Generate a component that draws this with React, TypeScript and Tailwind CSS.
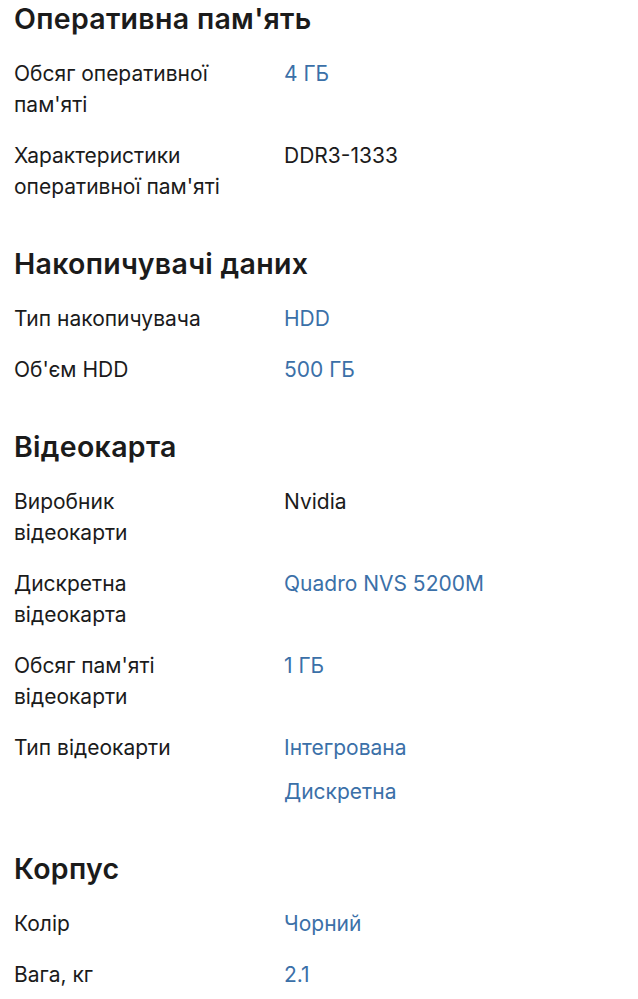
import React from 'react';

type Row = { label: string; values: string[]; link?: boolean };
type Section = { title: string; rows: Row[] };

const sections: Section[] = [
  {
    title: "Оперативна пам'ять",
    rows: [
      { label: "Обсяг оперативної пам'яті", values: ['4 ГБ'], link: true },
      { label: "Характеристики оперативної пам'яті", values: ['DDR3-1333'] },
    ],
  },
  {
    title: 'Накопичувачі даних',
    rows: [
      { label: 'Тип накопичувача', values: ['HDD'], link: true },
      { label: "Об'єм HDD", values: ['500 ГБ'], link: true },
    ],
  },
  {
    title: 'Відеокарта',
    rows: [
      { label: 'Виробник відеокарти', values: ['Nvidia'] },
      { label: 'Дискретна відеокарта', values: ['Quadro NVS 5200M'], link: true },
      { label: "Обсяг пам'яті відеокарти", values: ['1 ГБ'], link: true },
      { label: 'Тип відеокарти', values: ['Інтегрована', 'Дискретна'], link: true },
    ],
  },
  {
    title: 'Корпус',
    rows: [
      { label: 'Колір', values: ['Чорний'], link: true },
      { label: 'Вага, кг', values: ['2.1'], link: true },
    ],
  },
];

function App() {
  return (
    <div className="min-h-screen bg-white px-[14px] pt-px font-['Inter',sans-serif] text-[#1b1b1b]">
      <div className="flex flex-col gap-[44px]">
        {sections.map((s) => (
          <section key={s.title} className="flex flex-col gap-5">
            <h2 className="mb-px text-[28.5px] font-semibold leading-[36px] tracking-[0.3px]">{s.title}</h2>
            {s.rows.map((r) => (
              <div key={r.label} className="grid grid-cols-[270px_1fr] text-[21px] leading-[31px]">
                <div className="max-w-[206px]">{r.label}</div>
                <div className="flex flex-col gap-[13px]">
                  {r.values.map((v) => (
                    <span key={v} className={r.link ? 'text-[#3b70a8]' : ''}>
                      {v}
                    </span>
                  ))}
                </div>
              </div>
            ))}
          </section>
        ))}
      </div>
    </div>
  );
}

export default App;
